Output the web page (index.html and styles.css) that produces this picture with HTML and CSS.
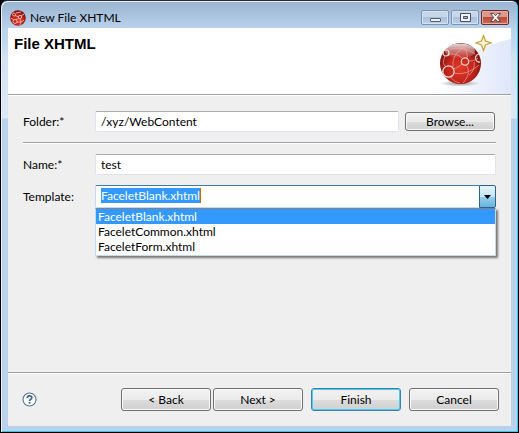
FILE: index.html
```html
<!DOCTYPE html>
<html lang="en">
<head>
<meta charset="utf-8">
<title>New File XHTML</title>
<link rel="stylesheet" href="styles.css">
</head>
<body>
<svg class="defs" width="0" height="0" aria-hidden="true">
  <defs>
    <radialGradient id="ball" cx="50%" cy="62%" r="58%">
      <stop offset="0" stop-color="#e23a28"/><stop offset=".55" stop-color="#c3261c"/><stop offset="1" stop-color="#761010"/>
    </radialGradient>
    <linearGradient id="gloss" x1="0" y1="0" x2="0" y2="1">
      <stop offset="0" stop-color="#fff" stop-opacity=".85"/><stop offset="1" stop-color="#fff" stop-opacity="0"/>
    </linearGradient>
    <radialGradient id="shade"><stop offset="0" stop-color="#555" stop-opacity=".6"/><stop offset="1" stop-color="#555" stop-opacity="0"/></radialGradient>
  </defs>
</svg>
<main class="window">
  <header class="titlebar">
    <svg class="app-icon" viewBox="0 0 16 16" aria-hidden="true">
      <circle cx="8" cy="8" r="7.8" fill="url(#ball)"/>
      <g fill="none" stroke="#f5b3aa" stroke-width=".9">
        <circle cx="4" cy="4.5" r="1.5"/><circle cx="10" cy="7" r="1.7"/><circle cx="5" cy="11.5" r="2"/>
        <path d="M5 5.5 9 7M6 10l3-2M10 9c1 2 1 4 0 6M7 12h4l3-2M6 3l5-1M11 6l3-2M1 8l3 2"/>
      </g>
    </svg>
    <h1 class="title">New File XHTML</h1>
    <div class="controls">
      <button class="control" type="button" aria-label="Minimize">
        <svg width="13" height="12" viewBox="0 0 13 12"><rect x="1.5" y="6.500" width="10" height="3" rx=".5" fill="#eee" stroke="#555f6e"/></svg>
      </button>
      <button class="control" type="button" aria-label="Maximize">
        <svg width="13" height="12" viewBox="0 0 13 12"><path d="M1.500 1.500h10v8h-10zM4.500 4.500h4v2h-4z" fill="#f4f4f4" fill-rule="evenodd" stroke="#46506a"/></svg>
      </button>
      <button class="control close" type="button" aria-label="Close">
        <svg width="13" height="12" viewBox="0 0 13 12"><path d="M1.500 1.500h3l2 2.200 2-2.200h3L8.300 5.500l3.200 4h-3l-2-2.300-2 2.300h-3l3.200-4z" fill="#f5f5f5" stroke="#5b4450"/></svg>
      </button>
    </div>
  </header>
  <form class="dialog">
    <div class="banner">
      <h2 class="heading">File XHTML</h2>
      <svg class="art" width="74" height="66" viewBox="0 0 74 66" aria-hidden="true">
        <defs><linearGradient id="wash" x1="0" x2="1" y1="0" y2="0"><stop offset="0" stop-color="#fff"/><stop offset="1" stop-color="#dfe7fa"/></linearGradient></defs>
        <path d="M0 66V48C28 28 48 16 74 11v55z" fill="url(#wash)"/>
        <ellipse cx="23" cy="55.500" rx="20" ry="3" fill="url(#shade)"/>
        <circle cx="23.500" cy="35.500" r="20.500" fill="url(#ball)"/>
        <ellipse cx="23" cy="23" rx="15" ry="7.500" fill="url(#gloss)"/>
        <g fill="none" stroke="#f2aaa1" stroke-width="1" stroke-opacity=".65">
          <path d="M12 26c5-1 12 2 14 5M32 33c4 0 7-1 9-3M12 22c9-4 18-1 26 4M8 28c-2 5-2 8 0 10M25 36c-3 3-6 4-9 5M29 37c4 5 3 11-3 18M17 45c8 2 17-1 25-8M30 30c1-5-2-10-7-14M16 39c-1-9 3-15 12-20M4 44l3-1M14 49c2 4 5 5 9 6M37 34c1 5-1 10-5 13"/>
        </g>
        <g fill="none" stroke="#fbd9d4" stroke-width="1.200">
          <circle cx="9" cy="25" r="3"/><circle cx="28" cy="33.500" r="3.700"/><circle cx="11.500" cy="43.500" r="5.700"/><path d="M42 26a4 4 0 1 0 1 8"/>
        </g>
        <path d="M46.500 7.500 48.500 13l5.500 2-5.500 2-2 5.500-2-5.500L39 15l5.500-2z" fill="#fff6cf" stroke="#c79e3c" stroke-width="1.200"/>
      </svg>
    </div>
    <div class="fields">
      <div class="row">
        <label for="folder">Folder:*</label>
        <input class="text" id="folder" value="/xyz/WebContent">
        <button class="button browse" type="button">Browse...</button>
      </div>
      <hr class="rule">
      <div class="row name-row">
        <label for="name">Name:*</label>
        <input class="text" id="name" value="test">
      </div>
      <div class="row">
        <label for="template">Template:</label>
        <div class="combo">
          <div class="combo-field"><input class="combo-input" id="template" value="FaceletBlank.xhtml"></div>
          <button class="combo-arrow" type="button" aria-label="Show templates"><svg width="7" height="4" viewBox="0 0 7 4"><path d="M0 0h7L3.500 4z"/></svg></button>
          <select class="options" size="3" aria-label="Templates">
            <option selected>FaceletBlank.xhtml</option>
            <option>FaceletCommon.xhtml</option>
            <option>FaceletForm.xhtml</option>
          </select>
        </div>
      </div>
    </div>
    <footer class="footer">
      <button class="help" type="button" aria-label="Help">
        <svg width="15" height="15" viewBox="0 0 15 15"><circle cx="7.500" cy="7.500" r="6.500" fill="#f8fafc" stroke="#5d7391" stroke-width="1.100"/><path d="M5.300 6c0-3 4.500-2.700 4.500-.3 0 1.600-2.200 1.600-2.200 3.400" fill="none" stroke="#47648b" stroke-width="1.700"/><rect x="6.700" y="10" width="1.800" height="1.700" fill="#47648b"/></svg>
      </button>
      <div class="pager">
        <button class="button" type="button">&lt; Back</button>
        <button class="button" type="button">Next &gt;</button>
      </div>
      <button class="button default" type="button">Finish</button>
      <button class="button" type="button">Cancel</button>
    </footer>
  </form>
</main>
</body>
</html>
```
FILE: styles.css
```css
* { box-sizing: border-box; }

body {
  margin: 0;
  background: #000;
  color: #000;
  font: 12px/16px Lato, "Open Sans", sans-serif;
}

button, input, select { margin: 0; color: inherit; font: inherit; }

.defs { position: absolute; }

.window {
  display: flex;
  flex-direction: column;
  min-height: 100vh;
  padding: 0 6px 6px;
  border: 1px solid #000;
  border-top-color: #2b2930;
  border-radius: 7px 7px 0 0;
  background: linear-gradient(#99b4d1, #b9d1ea 27px, #d3e3f3 60px, #dce8f5 117px, #b9d1ea 118px);
  box-shadow: inset 1px 1px #e6f1fa, inset -1px -1px #35c5e8;
}

.titlebar {
  display: flex;
  align-items: center;
  height: 27px;
  padding: 6px 3px 0;
}

.app-icon { width: 16px; height: 16px; }

.title { flex: 1; margin: 0 0 0 4px; font-size: 12px; font-weight: 400; }

.controls { display: flex; gap: 2px; }

.control {
  display: grid;
  place-items: center;
  width: 28px;
  height: 15px;
  padding: 0;
  border: 1px solid #7c94b4;
  border-radius: 2px;
  background: linear-gradient(#c6d7ea 50%, #a9c0dc 50%, #bdd2e8);
  box-shadow: inset 0 0 0 1px #d5e3f1;
}

.close {
  border-color: #6b2b30;
  background: linear-gradient(#dc9a8d 45%, #bb4a38 50%, #cf6d55);
  box-shadow: inset 0 0 0 1px #e5aaa0;
}

.dialog {
  display: flex;
  flex: 1;
  flex-direction: column;
  margin: 0 1px;
  background: #efefef;
}

.banner {
  display: flex;
  justify-content: space-between;
  height: 68px;
  padding-left: 6px;
  border-bottom: 1px solid #fff;
  background: linear-gradient(#a0a0a0, #a0a0a0) bottom / 100% 1px no-repeat #fff;
}

.heading { margin: 8px 0 0; font: bold 15px/16px "Liberation Sans", Arial, sans-serif; }

.fields { flex: 1; padding: 15px 15px 0; }

.row { display: flex; align-items: center; }

.row label { width: 72px; }

.text {
  flex: 1;
  min-width: 0;
  height: 21px;
  padding: 0 5px;
  border: 1px solid #e2e3ea;
  border-top-color: #abadb3;
  border-radius: 2px;
  background: #fff;
}

.button {
  width: 90px;
  height: 23px;
  padding: 0;
  border: 1px solid #707070;
  border-radius: 3px;
  background: linear-gradient(#f2f2f2, #ebebeb 50%, #dddddd 50%, #cfcfcf);
  box-shadow: inset 0 0 0 1px #fafafa;
  line-height: 20px;
}

.browse { height: 19px; margin: 0 1px 0 6px; line-height: 16px; }

.default { border-color: #3c7fb1; box-shadow: inset 0 0 0 1px #48cdf4; }

.rule {
  height: 2px;
  margin: 10px 0;
  border: 0;
  border-top: 1px solid #a0a0a0;
  background: #fff;
}

.name-row { margin-bottom: 10px; }

.combo { position: relative; display: flex; flex: 1; height: 23px; }

.combo-field {
  flex: 1;
  min-width: 0;
  padding: 2px 5px;
  border: 1px solid #c5daed;
  border-top-color: #3d7bad;
  border-right: 0;
  border-radius: 2px 0 0 2px;
  background: #fff;
}

.combo-input {
  display: block;
  height: 15px;
  padding: 0;
  border: 0;
  border-right: 1px solid #cc6600;
  outline: 0;
  background: #3399ff;
  color: #fff;
  line-height: 15px;
  field-sizing: content;
}

.combo-arrow {
  display: grid;
  place-items: center;
  width: 17px;
  padding: 0;
  border: 1px solid #2c628b;
  border-radius: 0 2px 2px 0;
  background: linear-gradient(#e5f4fc, #c4e5f6 50%, #98d1ef 50%, #68b3db);
}

.options {
  position: absolute;
  top: 100%;
  left: 0;
  width: 100%;
  height: 48px;
  padding: 0;
  overflow: hidden;
  border: 1px solid #c5daed;
  border-top-color: #7f8489;
  border-radius: 0;
  outline: 0;
  background: #fff;
  box-shadow: 2px 2px 2px #777;
  scrollbar-width: none;
}

.options option { min-height: 15px; height: 15px; padding: 0 2px; line-height: 15px; }

.options option:checked { background: linear-gradient(#3399ff, #3399ff); color: #fff; }

.footer {
  display: flex;
  align-items: center;
  gap: 8px;
  height: 54px;
  padding: 0 12px 0 14px;
  border-top: 1px solid #a0a0a0;
  box-shadow: inset 0 1px #fff;
}

.help { display: grid; margin-right: auto; padding: 0; border: 0; background: none; }

.pager { display: flex; gap: 2px; }
```
